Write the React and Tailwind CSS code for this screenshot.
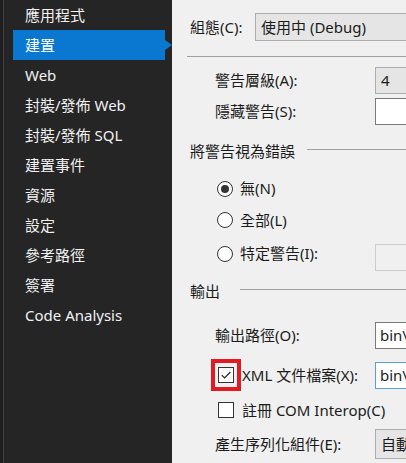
import React from 'react';

const navItems = ['應用程式', '建置', 'Web', '封裝/發佈 Web', '封裝/發佈 SQL', '建置事件', '資源', '設定', '參考路徑', '簽署', 'Code Analysis'];

const Radio = ({ checked, label }) => (
  <div className="flex items-center h-[31.5px]">
    <span className="w-[16px] h-[16px] rounded-full border border-[#333333] bg-white flex items-center justify-center">
      {checked && <span className="w-[8px] h-[8px] rounded-full bg-[#333333]" />}
    </span>
    <span className="ml-[7px]">{label}</span>
  </div>
);

const Checkbox = ({ checked }) => (
  <span className="w-[16px] h-[16px] border border-[#333333] bg-white flex items-center justify-center shrink-0">
    {checked && (
      <svg width="12" height="12" viewBox="0 0 12 12">
        <path d="M1.8 6.2 L4.6 9 L10.4 3" fill="none" stroke="#222" strokeWidth="1.2" />
      </svg>
    )}
  </span>
);

const FieldRow = ({ label, children, className = '' }) => (
  <div className={`flex items-center ${className}`}>
    <span className="w-[160px] shrink-0">{label}</span>
    {children}
  </div>
);

export default function App() {
  return (
    <div className="w-[406px] h-[463px] flex overflow-hidden font-['Noto_Sans','Noto_Sans_CJK_TC',sans-serif] text-[15px] leading-none">
      {/* Sidebar */}
      <div className="w-[172px] shrink-0 bg-[#1e1e1e] pl-[3px]">
        <div className="h-full bg-[#252526] border-l border-[#3f3f46]">
          {navItems.map((item) =>
            item === '建置' ? (
              <div key={item} className="flex items-center h-[30px] pl-[9px]">
                <div className="w-[152px] h-[30px] bg-[#0a78d0] text-white flex items-center pl-[12px]">{item}</div>
                <div className="w-0 h-0 border-y-[5px] border-y-transparent border-l-[7px] border-l-[#0a78d0]" />
              </div>
            ) : (
              <div key={item} className="flex items-center h-[30px] pl-[21px] text-[#f1f1f1]">{item}</div>
            )
          )}
        </div>
      </div>

      {/* Settings panel */}
      <div className="flex-1 bg-[#f0f0f0] text-[#1b1b1b] overflow-hidden">
        <div className="flex items-center pl-[18px] pt-[13px]">
          <span className="w-[65px] shrink-0">組態(C):</span>
          <div className="w-[200px] shrink-0 h-[28px] bg-[#e5e5e5] border border-[#adadad] flex items-center pl-[5px]">使用中 (Debug)</div>
        </div>
        <div className="ml-[15px] mt-[15px] h-px bg-[#a0a0a0]" />

        <div className="pl-[43px] mt-[10px] flex flex-col gap-[4px]">
          <FieldRow label="警告層級(A):">
            <div className="w-[60px] shrink-0 h-[27px] bg-[#e5e5e5] border border-[#adadad] flex items-center pl-[5px]">4</div>
          </FieldRow>
          <FieldRow label="隱藏警告(S):">
            <div className="w-[60px] shrink-0 h-[27px] bg-white border border-[#7a7a7a]" />
          </FieldRow>
        </div>

        <div className="flex items-center pl-[18px] mt-[16px] h-[20px]">
          <span>將警告視為錯誤</span>
          <div className="flex-1 h-px bg-[#a0a0a0] ml-[12px] -mt-[3px]" />
        </div>

        <div className="pl-[45px] mt-[12px]">
          <Radio checked label="無(N)" />
          <Radio label="全部(L)" />
          <div className="flex items-center">
            <div className="w-[158px] shrink-0">
              <Radio label="特定警告(I):" />
            </div>
            <div className="w-[60px] shrink-0 h-[27px] bg-[#f0f0f0] border border-[#cccccc] mt-[8px]" />
          </div>
        </div>

        <div className="flex items-center pl-[18px] mt-[10px] h-[20px]">
          <span>輸出</span>
          <div className="flex-1 h-px bg-[#a0a0a0] ml-[20px] -mt-[3px]" />
        </div>

        <div className="pl-[43px] mt-[21px] flex flex-col">
          <FieldRow label="輸出路徑(O):">
            <div className="w-[60px] shrink-0 h-[27px] bg-white border border-[#7a7a7a] flex items-center pl-[4px] whitespace-nowrap overflow-hidden">bin\</div>
          </FieldRow>
          <FieldRow label={
            <span className="flex items-center">
              <span className="-ml-[4px] w-[30px] h-[32px] border-[4px] border-[#e41a23] flex items-center justify-center">
                <Checkbox checked />
              </span>
              <span className="ml-[1px]">XML 文件檔案(X):</span>
            </span>
          } className="mt-[10px]">
            <div className="w-[60px] shrink-0 h-[27px] bg-white border border-[#5a9fd8] flex items-center pl-[4px] whitespace-nowrap overflow-hidden">bin\</div>
          </FieldRow>
          <div className="flex items-center h-[20px] mt-[9px] pl-[3px]">
            <Checkbox />
            <span className="ml-[8px]">註冊 COM Interop(C)</span>
          </div>
          <FieldRow label="產生序列化組件(E):" className="mt-[9px]">
            <div className="w-[60px] shrink-0 h-[30px] bg-[#e5e5e5] border border-[#adadad] flex items-center pl-[5px] whitespace-nowrap overflow-hidden">自動產生</div>
          </FieldRow>
        </div>
      </div>
    </div>
  );
}
